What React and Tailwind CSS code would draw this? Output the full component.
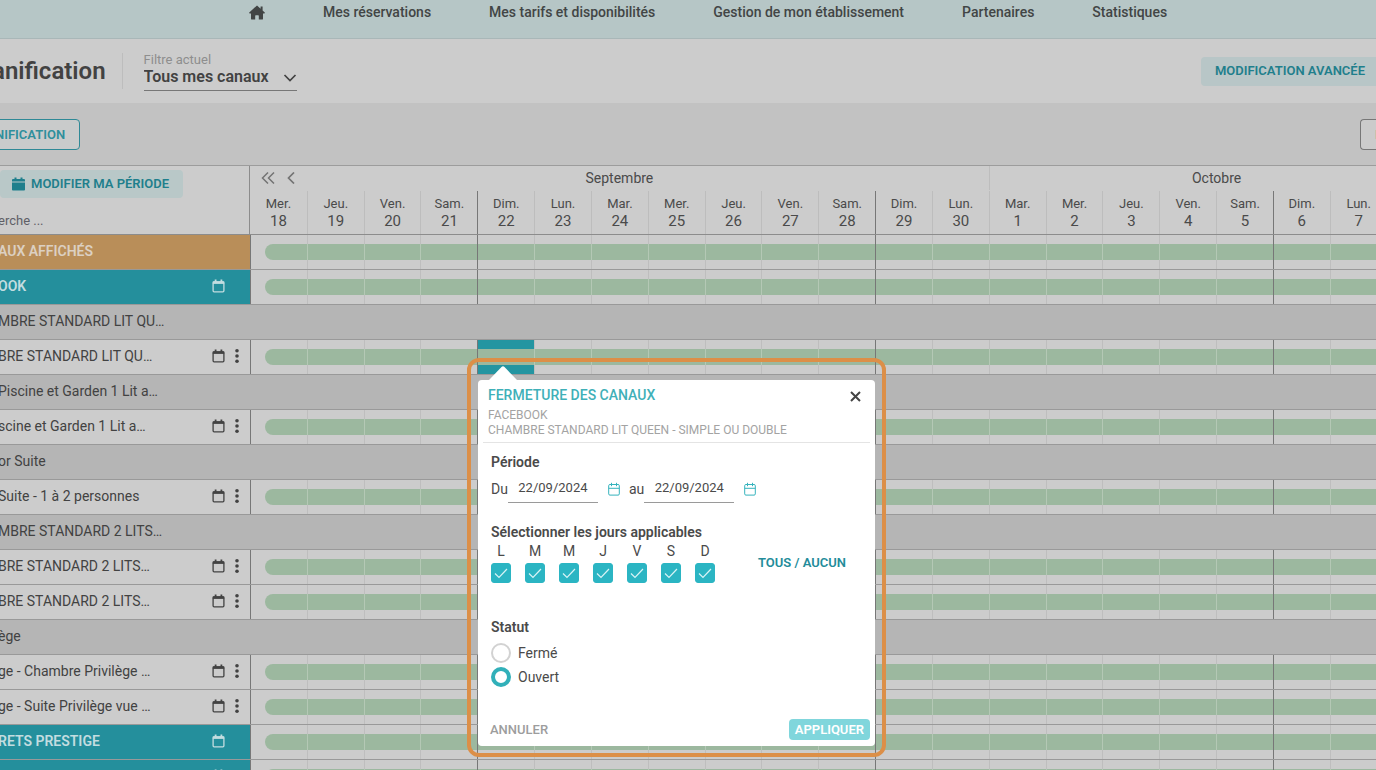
import { useState } from "react";
import clsx from "clsx";

const NAV_LINKS = [
  "Mes réservations",
  "Mes tarifs et disponibilités",
  "Gestion de mon établissement",
  "Partenaires",
  "Statistiques",
];

const WEEK = ["Mer.", "Jeu.", "Ven.", "Sam.", "Dim.", "Lun.", "Mar."];

// 18 September -> 7 October, the last column runs past the window
const DAYS = Array.from({ length: 20 }, (_, i) => ({
  name: WEEK[i % 7],
  number: i < 13 ? 18 + i : i - 12,
}));
const COLUMNS = Array.from({ length: 21 }, (_, i) => i);
const SELECTED_DAY = 4;

const ROWS = [
  { type: "all", label: "AUX AFFICHÉS" },
  { type: "channel", label: "OOK" },
  { type: "group", label: "MBRE STANDARD LIT QU…" },
  { type: "rate", label: "BRE STANDARD LIT QU…", selected: true },
  { type: "group", label: "Piscine et Garden 1 Lit a…" },
  { type: "rate", label: "scine et Garden 1 Lit a…" },
  { type: "group", label: "or Suite" },
  { type: "rate", label: "Suite - 1 à 2 personnes" },
  { type: "group", label: "MBRE STANDARD 2 LITS…" },
  { type: "rate", label: "BRE STANDARD 2 LITS…" },
  { type: "rate", label: "BRE STANDARD 2 LITS…" },
  { type: "group", label: "ège" },
  { type: "rate", label: "ge - Chambre Privilège …" },
  { type: "rate", label: "ge - Suite Privilège vue …" },
  { type: "channel", label: "RETS PRESTIGE" },
  { type: "channel", label: "" },
];

const GRID = "grid grid-cols-[250px_repeat(21,minmax(0,1fr))]";

const isSunday = (i) => i % 7 === 4;

function HomeIcon() {
  return (
    <svg viewBox="0 0 16 15" className="h-[15px] w-4" fill="currentColor" aria-hidden="true">
      <path d="M8 .4 11.6 3.7V1.6h2v3.9L16 7.8l-.6.7H14v5.2c0 .6-.4.9-.9.9H9.8v-3.8c0-.4-.2-.6-.6-.6H6.8c-.4 0-.6.2-.6.6v3.8H2.9c-.5 0-.9-.3-.9-.9V8.500H.6L0 7.800z" />
    </svg>
  );
}

function CalendarIcon() {
  return (
    <svg viewBox="0 0 13 14" className="h-3.5 w-[13px]" fill="none" stroke="currentColor" aria-hidden="true">
      <rect x="1.100" y="2.800" width="10.800" height="10" rx="1" strokeWidth="1.300" />
      <path d="M.8 3.600h11.400" strokeWidth="2.600" />
      <path d="M3.600.6v2.400M9.400.6v2.400" strokeWidth="1.800" />
    </svg>
  );
}

function CalendarFilledIcon() {
  return (
    <svg viewBox="0 0 13 14" className="h-3.5 w-[13px]" fill="currentColor" aria-hidden="true">
      <path d="M2.500.5h2V2h4V.5h2V2h1.300c.7 0 1.200.5 1.200 1.200v1.300H0V3.200C0 2.500.5 2 1.200 2h1.300zM0 5.400h13v7.100c0 .6-.5 1.100-1.200 1.100H1.200C.5 13.600 0 13.100 0 12.500z" />
    </svg>
  );
}

function CalendarThinIcon() {
  return (
    <svg viewBox="0 0 12 14" className="h-3.5 w-3" fill="none" stroke="currentColor" aria-hidden="true">
      <rect x=".7" y="2.500" width="10.600" height="10.600" rx="1.200" />
      <path d="M.7 6.300h10.600M3.500.8v3.400M8.500.8v3.400" />
    </svg>
  );
}

function DotsIcon() {
  return (
    <svg viewBox="0 0 4 14" className="h-3.5 w-1" fill="currentColor" aria-hidden="true">
      <circle cx="2" cy="1.800" r="1.800" />
      <circle cx="2" cy="7" r="1.800" />
      <circle cx="2" cy="12.200" r="1.800" />
    </svg>
  );
}

function TopNav() {
  return (
    <nav className="flex h-[39px] items-start gap-[58px] border-b border-[#a9b7b8] bg-[#b6c6c6] pl-[249px] text-sm leading-6 font-medium whitespace-nowrap text-[#424545]">
      <a href="#" aria-label="Accueil" className="flex h-6 items-center">
        <HomeIcon />
      </a>
      {NAV_LINKS.map((label) => (
        <a key={label} href="#">
          {label}
        </a>
      ))}
    </nav>
  );
}

function PageHeader() {
  return (
    <header className="flex h-[65px] items-center border-b border-[#c2c2c2] bg-[#cccccc]">
      <h1 className="-ml-2 pr-4 text-2xl font-semibold text-[#424242]">anification</h1>
      <div className="h-9 border-l border-[#bdbdbd] pr-[21px]" />
      <div className="flex w-[153px] flex-col border-b border-[#777777]">
        <label htmlFor="filter" className="text-[13px] leading-4 text-[#8e8e8e]">
          Filtre actuel
        </label>
        <div className="relative flex">
          <select
            id="filter"
            className="h-[22px] w-full appearance-none pb-1 text-base leading-[18px] font-semibold text-[#424242] outline-none"
          >
            <option>Tous mes canaux</option>
          </select>
          <svg
            viewBox="0 0 14 8"
            className="pointer-events-none absolute top-1.5 right-0 h-2 w-3.5"
            fill="none"
            stroke="#424242"
            strokeWidth="1.700"
            aria-hidden="true"
          >
            <path d="m1.500 1 5.500 5.500L12.500 1" />
          </svg>
        </div>
      </div>
      <button className="ml-auto h-[29px] rounded-l bg-[#b8c6c7] pr-[11px] pl-3.5 text-[13px] font-semibold text-[#1f7f8c]">
        MODIFICATION AVANCÉE
      </button>
    </header>
  );
}

function Toolbar() {
  return (
    <div className="flex h-[61px] items-center justify-between overflow-hidden bg-[#c2c2c2]">
      <button className="-ml-1.5 h-[31px] rounded-r border border-[#2f8996] bg-[#c9cbcb] pr-3.5 text-[13px] font-semibold text-[#2f8f9c]">
        NIFICATION
      </button>
      <button className="h-[31px] w-4 rounded-l border border-r-0 border-[#777777] bg-[#cbcbcb] pl-3.5 text-left text-[13px] font-semibold text-[#777777]">
        I
      </button>
    </div>
  );
}

function PlanningHead() {
  return (
    <thead className="block border-y border-[#8c8c8c] border-t-[#9c9c9c] bg-[#cccccc]">
      <tr className={clsx(GRID, "h-[25px]")}>
        <th className="row-span-2 border-r border-[#8c8c8c] text-left font-normal">
          <div className="flex h-[68px] flex-col items-start justify-between pt-1 pb-[5px]">
            <button className="flex h-7 items-center gap-1.5 rounded bg-[#b9c8c8] pr-3.5 pl-3 text-[13px] font-semibold text-[#1f7f8c]">
              <CalendarFilledIcon />
              MODIFIER MA PÉRIODE
            </button>
            <input
              aria-label="Recherche"
              placeholder="erche ..."
              className="-ml-0.5 w-40 text-[13px] leading-4 outline-none placeholder:text-[#5f5f66]"
            />
          </div>
        </th>
        <th className="relative col-span-13 text-sm leading-6 font-normal text-[#4a4a4a]">
          <div className="absolute top-0 left-[11px] flex h-[23px] items-center gap-3 text-[#747474]">
            <button aria-label="Semaine précédente">
              <svg viewBox="0 0 14 12" className="h-3 w-3.5" fill="none" stroke="currentColor" strokeWidth="1.500">
                <path d="M7 .5 1.500 6 7 11.500M13 .5 7.500 6l5.500 5.500" />
              </svg>
            </button>
            <button aria-label="Jour précédent">
              <svg viewBox="0 0 8 12" className="h-3 w-2" fill="none" stroke="currentColor" strokeWidth="1.700">
                <path d="M7 .5 1.500 6 7 11.500" />
              </svg>
            </button>
          </div>
          Septembre
        </th>
        <th className="col-span-8 border-l border-[#bdbdbd] text-sm leading-6 font-normal text-[#4a4a4a]">
          Octobre
        </th>
      </tr>
      <tr className={clsx(GRID, "h-[43px]")}>
        <td />
        {DAYS.map((day, i) => (
          <th
            key={i}
            className={clsx(
              "pt-1 font-normal text-[#4a4a4a]",
              i > 0 && "border-l",
              isSunday(i) ? "border-[#777777]" : "border-[#bdbdbd]"
            )}
          >
            <div className="text-[13px] leading-[17px]">{day.name}</div>
            <div className="text-[15px] leading-[18px]">{day.number}</div>
          </th>
        ))}
      </tr>
    </thead>
  );
}

function DayCell({ index, selected }) {
  const first = index === 0;
  const dark = first || isSunday(index);
  return (
    <td
      className={clsx(
        "border-l py-[9px]",
        dark ? "border-[#777777]" : "border-[#bebebe]",
        selected && "bg-[#2495a1]"
      )}
    >
      <div
        className={clsx(
          "h-4 bg-[#9cb89f]",
          first && "ml-3.5 rounded-l-full",
          !dark && "-ml-px border-l border-[#b4c8b5]"
        )}
      />
    </td>
  );
}

function PlanningRow({ row }) {
  const { type, label } = row;

  if (type === "group") {
    return (
      <tr className="flex h-[35px] border-b border-[#999999] bg-[#b5b5b5]">
        <th className="-ml-0.5 text-left text-sm leading-8 font-normal whitespace-nowrap text-[#424242]">
          {label}
        </th>
      </tr>
    );
  }

  return (
    <tr className={clsx(GRID, "h-[35px] border-b border-[#999999] bg-[#cccccc]")}>
      <th
        className={clsx(
          "flex items-center pr-[11px] pb-0.5 text-sm whitespace-nowrap",
          type === "all" && "bg-[#b98e59] font-semibold text-[#dcd0c2]",
          type === "channel" && "bg-[#248f9c] font-semibold text-[#c3dde0]",
          type === "rate" && "font-normal text-[#424242]"
        )}
      >
        <span className="-ml-0.5 grow text-left">{label}</span>
        {type !== "all" && (
          <button aria-label="Calendrier">
            <CalendarIcon />
          </button>
        )}
        {type === "rate" ? (
          <button aria-label="Options" className="ml-2.5">
            <DotsIcon />
          </button>
        ) : (
          <span className="w-3.5" />
        )}
      </th>
      {COLUMNS.map((i) => (
        <DayCell key={i} index={i} selected={row.selected && i === SELECTED_DAY} />
      ))}
    </tr>
  );
}

function DateField({ id, label }) {
  return (
    <>
      <label htmlFor={id} className="text-sm">
        {label}
      </label>
      <input
        id={id}
        defaultValue="22/09/2024"
        className="mr-2.5 h-7 w-[90px] border-b border-[#9a9a9a] pb-0.5 text-center text-[13px] outline-none"
      />
      <button aria-label="Ouvrir le calendrier" className="text-[#35b3bd]">
        <CalendarThinIcon />
      </button>
    </>
  );
}

function CloseChannelsPopover() {
  const [days, setDays] = useState(Array(7).fill(true));
  const [status, setStatus] = useState("Ouvert");

  const toggleDay = (i) => setDays(days.map((on, j) => (i === j ? !on : on)));
  const toggleAll = () => setDays(Array(7).fill(!days.every(Boolean)));

  return (
    <div className="absolute top-[358px] left-[467px] w-[419px] rounded-xl border-4 border-[#dc8f48] px-[7px] pt-[18px] pb-[7px]">
      <div role="dialog" aria-label="Fermeture des canaux" className="relative rounded bg-white pb-1.5 text-[#4a4a4a]">
        <svg viewBox="0 0 28 14" className="absolute -top-3.5 left-[11px] h-3.5 w-7" fill="white" aria-hidden="true">
          <path d="M0 14 12.500 1q1.500-1.400 3 0L28 14z" />
        </svg>
        <div className="mx-[5px] flex h-[63px] justify-between border-b border-[#e4e4e4] px-[5px] pt-1.5">
          <div>
            <h2 className="text-sm leading-[18px] font-medium text-[#3fb0b8]">FERMETURE DES CANAUX</h2>
            <p className="pt-1 text-xs leading-[15px] text-[#a3a3a3]">
              FACEBOOK
              <br />
              CHAMBRE STANDARD LIT QUEEN - SIMPLE OU DOUBLE
            </p>
          </div>
          <button aria-label="Fermer" className="mr-1 flex h-5 items-center">
            <svg viewBox="0 0 11 11" className="size-[11px]" stroke="#444444" strokeWidth="2" aria-hidden="true">
              <path d="m1 1 9 9M10 1l-9 9" />
            </svg>
          </button>
        </div>

        <div className="px-[13px]">
          <h3 className="pt-[9px] text-sm leading-5 font-semibold">Période</h3>
          <div className="flex items-center pt-[3px]">
            <DateField id="from" label="Du" />
            <span className="w-[9px]" />
            <DateField id="to" label="au" />
          </div>

          <h3 className="pt-[19px] text-sm leading-5 font-semibold">Sélectionner les jours applicables</h3>
          <div className="flex items-center">
            <div className="flex gap-3.5">
              {["L", "M", "M", "J", "V", "S", "D"].map((day, i) => (
                <label key={i} className="flex w-5 flex-col items-center text-sm leading-[18px]">
                  {day}
                  <span className="relative mt-[3px] size-5">
                    <input
                      type="checkbox"
                      checked={days[i]}
                      onChange={() => toggleDay(i)}
                      className="block size-5 appearance-none rounded-[3px] border border-[#2bb5c3] checked:bg-[#2bb5c3]"
                    />
                    {days[i] && (
                      <svg
                        viewBox="0 0 20 20"
                        className="pointer-events-none absolute inset-0 size-5"
                        fill="none"
                        stroke="#d9f4f6"
                        strokeWidth="1.200"
                      >
                        <path d="m4 10.500 4 4 8-8.500" />
                      </svg>
                    )}
                  </span>
                </label>
              ))}
            </div>
            <button onClick={toggleAll} className="ml-[43px] text-[13px] font-semibold text-[#238c9a]">
              TOUS / AUCUN
            </button>
          </div>

          <fieldset className="pt-8">
            <legend className="contents text-sm leading-5 font-semibold">Statut</legend>
            <div className="flex flex-col gap-1 pt-1">
              {["Fermé", "Ouvert"].map((value) => (
                <label key={value} className="flex items-center gap-[7px] text-sm leading-5">
                  <input
                    type="radio"
                    name="status"
                    checked={status === value}
                    onChange={() => setStatus(value)}
                    className="size-5 appearance-none rounded-full border-2 border-[#d2d2d2] bg-white checked:border-4 checked:border-[#31b0b9]"
                  />
                  {value}
                </label>
              ))}
            </div>
          </fieldset>
        </div>

        <div className="flex items-center justify-between pt-8 pr-[5px] pl-3 text-[13px]">
          <button className="font-medium text-[#9d9d9d]">ANNULER</button>
          <button className="h-[21px] rounded bg-[#80d6dc] px-1.5 font-semibold text-white">APPLIQUER</button>
        </div>
      </div>
    </div>
  );
}

export default function App() {
  return (
    <div className="relative h-screen overflow-hidden bg-[#cccccc] font-[Roboto,sans-serif]">
      <TopNav />
      <PageHeader />
      <Toolbar />
      <table className="block w-[104.9%]">
        <PlanningHead />
        <tbody className="block">
          {ROWS.map((row, i) => (
            <PlanningRow key={i} row={row} />
          ))}
        </tbody>
      </table>
      <CloseChannelsPopover />
    </div>
  );
}
